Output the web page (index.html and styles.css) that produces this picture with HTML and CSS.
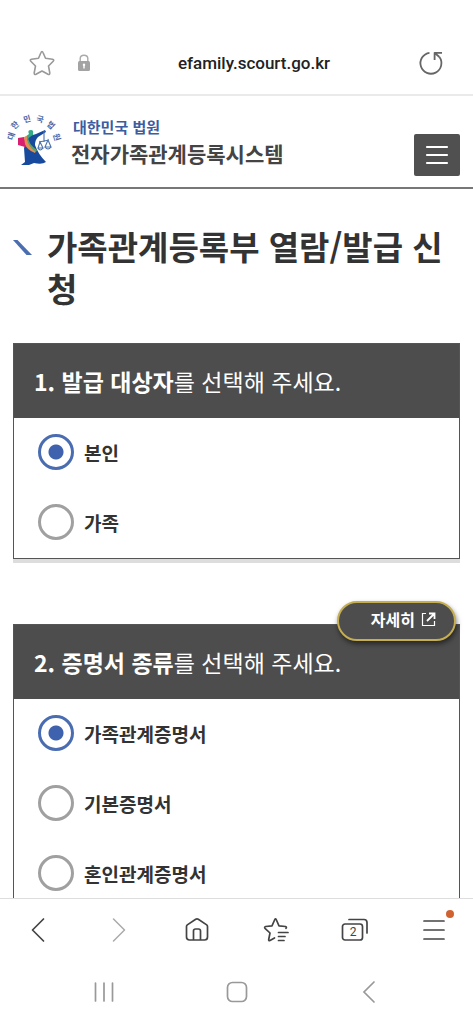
FILE: index.html
```html
<!DOCTYPE html>
<html lang="ko">

<head>
  <meta charset="UTF-8">
  <meta name="viewport" content="width=device-width, initial-scale=1.0">
  <title>전자가족관계등록시스템</title>
  <link rel="stylesheet" href="styles.css">
</head>

<body>

  <div class="address-bar">
    <button class="icon-btn" aria-label="즐겨찾기">
      <svg width="28" height="28" viewBox="0 0 28 28" fill="none" stroke="#999" stroke-width="1.6" stroke-linejoin="round"><path d="M14 2.5 Q14.6 2.5 15 3.5 L17.5 9.2 L24.5 10.2 Q26.5 10.8 25.2 12.2 L20.5 17 L21.8 24 Q21.8 26 20 25.3 L14 22 L8 25.3 Q6.2 26 6.2 24 L7.5 17 L2.8 12.2 Q1.5 10.8 3.5 10.2 L10.5 9.2 L13 3.5 Q13.4 2.5 14 2.5Z"/></svg>
    </button>
    <svg class="lock" width="14" height="18" viewBox="0 0 14 18"><path d="M3.2 8 V4.6 Q3.2 1.2 7 1.2 Q10.8 1.2 10.8 4.6 V8" fill="none" stroke="#aaa" stroke-width="1.4"/><rect x="1" y="7" width="12" height="10" rx="1.5" fill="#a3a3a3"/><path d="M7 9.5 A1.4 1.4 0 0 1 7.7 12 V14.5 H6.3 V12 A1.4 1.4 0 0 1 7 9.5" fill="#fff"/></svg>
    <span class="url">efamily.scourt.go.kr</span>
    <button class="icon-btn" aria-label="새로고침">
      <svg width="28" height="28" viewBox="0 0 28 28" fill="none" stroke="#666" stroke-width="1.8"><path d="M12.5 3.8 A10.5 10.5 0 1 0 22.4 8"/><path d="M25 3.8 H17.6 V11 M17.8 4 L22.4 8" stroke-linejoin="round"/></svg>
    </button>
  </div>

  <div class="page">
    <header class="site-header">
      <a class="logo" href="#">
        <svg class="emblem" width="62" height="64" viewBox="-3 -4 62 64">
          <g class="emblem-text">
            <text transform="translate(4 22) rotate(-72)" y="3">대</text>
            <text transform="translate(8 11) rotate(-43)" y="3">한</text>
            <text transform="translate(20 5) rotate(-15)" y="3">민</text>
            <text transform="translate(33 5) rotate(15)" y="3">국</text>
            <text transform="translate(44 11) rotate(43)" y="3">법</text>
            <text transform="translate(50 23) rotate(72)" y="3">원</text>
          </g>
          <path d="M22 20 Q20 16 24 16 Q27 16 26 20 L27 24 L19 28 L18 23 Z" fill="#35a985"/>
          <path d="M20 26 Q24 21 29 20 L38 16 L39 18 L31 23 Q28 26 28 31 Q31 40 39 48 Q35 51 27 49 L22 51 H14 L18 48 L17 34 Z" fill="#174a9c"/>
          <path d="M11 24 L17 23 L20 32 L18 33 L11 31Z" fill="#d81f70"/>
          <path d="M17 23 L20 22 Q20 31 29 37 L28 39 Q20 36 18 30Z" fill="#e58d50"/>
          <path d="M20 23 L21 22 Q21 30 30 36 L29 38 Q20 32 20 23Z" fill="#5ba16d"/>
          <g fill="none" stroke="#4d73ad" stroke-width="1.1">
            <path d="M37 17 V28 M32 28 L42 26 M33 28 L31 34 H36Z M41 26 L38 33 H44Z"/>
            <path d="M31 34 Q33 38 36 34 M38 33 Q41 37 44 33"/>
          </g>
        </svg>
        <span class="logo-text">
          <span class="logo-sub">대한민국 법원</span>
          <span class="logo-name">전자가족관계등록시스템</span>
        </span>
      </a>
      <button class="menu-btn" aria-label="전체메뉴">
        <svg width="24" height="20" viewBox="0 0 24 20" stroke="#fff" stroke-width="2.2" stroke-linecap="round"><path d="M2 2 H22 M2 10 H22 M2 18 H22"/></svg>
      </button>
    </header>

    <main class="content">
      <div class="title">
        <svg class="title-mark" width="20" height="16" viewBox="0 0 20 16"><path d="M0 0 H4.5 L19 15 H13.5Z" fill="#4a6eb0"/></svg>
        <h1>가족관계등록부 열람/발급 신청</h1>
      </div>

      <section class="step">
        <h2 id="step1"><b>1. 발급 대상자</b>를 선택해 주세요.</h2>
        <div class="options" role="radiogroup" aria-labelledby="step1">
          <label class="option"><input type="radio" name="target" checked>본인</label>
          <label class="option"><input type="radio" name="target">가족</label>
        </div>
      </section>

      <section class="step">
        <button class="detail-btn">자세히
          <svg width="15" height="15" viewBox="0 0 15 15" fill="none" stroke="#fff"><path d="M5 1.5 H1.5 V13.5 H13.5 V9" stroke-width="1.2"/><path d="M6 9 L12.5 2.5 M8 1.5 H13.5 V7" stroke-width="1.8"/></svg>
        </button>
        <h2 id="step2"><b>2. 증명서 종류</b>를 선택해 주세요.</h2>
        <div class="options" role="radiogroup" aria-labelledby="step2">
          <label class="option"><input type="radio" name="cert" checked>가족관계증명서</label>
          <label class="option"><input type="radio" name="cert">기본증명서</label>
          <label class="option"><input type="radio" name="cert">혼인관계증명서</label>
        </div>
      </section>
    </main>
  </div>

  <nav class="toolbar">
    <button class="icon-btn" aria-label="이전">
      <svg width="28" height="28" viewBox="0 0 28 28" fill="none" stroke="#444" stroke-width="1.7" stroke-linecap="round" stroke-linejoin="round"><path d="M18.5 3 L7.5 14 L18.5 25"/></svg>
    </button>
    <button class="icon-btn" aria-label="다음">
      <svg width="28" height="28" viewBox="0 0 28 28" fill="none" stroke="#aaa" stroke-width="1.5" stroke-linecap="round" stroke-linejoin="round"><path d="M9.5 3 L20.5 14 L9.5 25"/></svg>
    </button>
    <button class="icon-btn" aria-label="홈">
      <svg width="28" height="28" viewBox="0 0 28 28" fill="none" stroke="#444" stroke-width="1.7" stroke-linejoin="round"><path d="M3.5 10.5 Q3.5 9.5 4.3 8.9 L12.7 3.3 Q14 2.5 15.3 3.3 L23.7 8.9 Q24.5 9.5 24.5 10.5 V21 Q24.5 24 21.5 24 H6.5 Q3.5 24 3.5 21Z M10.5 24 V15 Q10.5 13 12.5 13 H15.5 Q17.5 13 17.5 15 V24"/></svg>
    </button>
    <button class="icon-btn" aria-label="북마크">
      <svg width="28" height="28" viewBox="0 0 28 28" fill="none" stroke="#444" stroke-width="1.7" stroke-linecap="round" stroke-linejoin="round"><path d="M12.5 22 L8 24.5 Q6.5 25 6.7 23.5 L8 17 L3 12.3 Q2 11 3.7 10.5 L10 9.8 L12.8 3.5 Q13.5 2 14.2 3.5 L17 9.8 L23.5 10.5 Q25 11 24 12.3 M16.5 16.5 H26 M16.5 20.5 H23 M16.5 24.5 H22"/></svg>
    </button>
    <button class="icon-btn" aria-label="탭">
      <svg width="28" height="28" viewBox="0 0 28 28" fill="none" stroke="#444" stroke-width="1.7" stroke-linecap="round"><rect x="1.5" y="8" width="20" height="16" rx="2.5"/><path d="M8 3.5 H23 Q26 3.5 26 6.5 V17"/></svg>
      <span class="tab-count">2</span>
    </button>
    <button class="icon-btn" aria-label="메뉴">
      <svg width="28" height="28" viewBox="0 0 28 28" fill="none" stroke="#444" stroke-width="1.7" stroke-linecap="round"><path d="M4 5 H24 M4 14 H24 M4 23 H24"/></svg>
      <span class="dot"></span>
    </button>
  </nav>

  <nav class="system-nav">
    <button class="icon-btn" aria-label="최근 앱">
      <svg width="28" height="28" viewBox="0 0 28 28" stroke="#999" stroke-width="1.7" stroke-linecap="round"><path d="M5.5 5 V23 M14 5 V23 M22.5 5 V23"/></svg>
    </button>
    <button class="icon-btn" aria-label="홈 화면">
      <svg width="28" height="28" viewBox="0 0 28 28" fill="none" stroke="#999" stroke-width="1.7"><rect x="4.5" y="4.5" width="19" height="19" rx="5"/></svg>
    </button>
    <button class="icon-btn" aria-label="뒤로">
      <svg width="28" height="28" viewBox="0 0 28 28" fill="none" stroke="#999" stroke-width="1.7" stroke-linecap="round"><path d="M19 4 L9 14 L19 24"/></svg>
    </button>
  </nav>

</body>

</html>
```
FILE: styles.css
```css
* {
  box-sizing: border-box;
}

body {
  margin: 0;
  height: 100vh;
  display: flex;
  flex-direction: column;
  background: #fff;
  color: #333;
  font-family: "Noto Sans CJK KR", sans-serif;
}

button {
  font-family: inherit;
  cursor: pointer;
}

svg {
  display: block;
}

.icon-btn {
  position: relative;
  padding: 0;
  border: none;
  background: none;
}

/* browser address bar */
.address-bar {
  display: flex;
  align-items: center;
  padding: 32px 28px 0;
  height: 96px;
  flex-shrink: 0;
  border-bottom: 2px solid #eaeaea;
}

.lock {
  margin-left: 21px;
}

.url {
  flex: 1;
  text-align: center;
  font-family: Roboto, sans-serif;
  font-size: 17px;
  font-weight: 500;
  color: #222;
}

/* web page */
.page {
  flex: 1;
  min-height: 0;
  overflow-y: auto;
  scrollbar-width: none;
}

.site-header {
  display: flex;
  justify-content: space-between;
  align-items: flex-end;
  height: 93px;
  padding: 0 13px 11px 4px;
  border-bottom: 2px solid #777;
}

.logo {
  display: flex;
  align-items: center;
  gap: 5px;
  padding-bottom: 2px;
  text-decoration: none;
}

.emblem {
  overflow: visible;
}

.emblem-text {
  font-size: 8px;
  font-weight: 700;
  text-anchor: middle;
  fill: #4d68a5;
}

.logo-text {
  display: flex;
  flex-direction: column;
}

.logo-sub {
  padding-left: 2px;
  font-size: 15px;
  line-height: 22px;
  font-weight: 700;
  color: #3c5da0;
}

.logo-name {
  font-size: 21px;
  line-height: 30px;
  font-weight: 700;
  color: #444;
}

.menu-btn {
  display: flex;
  align-items: center;
  justify-content: center;
  width: 46px;
  height: 42px;
  padding: 0;
  border: none;
  border-radius: 2px;
  background: #505050;
}

.content {
  padding: 36px 13px;
}

.title {
  display: flex;
  align-items: flex-start;
  gap: 14px;
  margin-bottom: 34px;
}

.title-mark {
  flex-shrink: 0;
  margin-top: 15px;
}

.title h1 {
  margin: 0;
  font-size: 33px;
  line-height: 42px;
  font-weight: 700;
  word-break: break-all;
}

.step {
  position: relative;
  margin-bottom: 65px;
  border: 1px solid #555;
  box-shadow: 0 4px 0 #ddd;
}

.step h2 {
  margin: 0;
  padding: 0 20px;
  font-size: 23px;
  line-height: 74px;
  font-weight: 400;
  color: #fff;
  background: #4d4d4d;
}

.step h2 b {
  font-weight: 700;
}

.option {
  display: flex;
  align-items: center;
  gap: 10px;
  height: 70px;
  padding: 0 0 2px 24px;
  font-size: 19px;
  font-weight: 700;
}

.option input {
  appearance: none;
  width: 36px;
  height: 36px;
  margin: 0;
  border: 3px solid #a0a0a0;
  border-radius: 50%;
  background: #fff;
}

.option input:checked {
  border-color: #4a6cb0;
  background: radial-gradient(circle, #3f62ae 7px, #fff 8px);
}

.detail-btn {
  position: absolute;
  top: -24px;
  right: 3px;
  display: flex;
  align-items: center;
  gap: 6px;
  height: 40px;
  padding: 0 18px 4px 32px;
  border: 2px solid #c5ae52;
  border-radius: 20px;
  background: #4d4d4d;
  box-shadow: 1px 3px 5px rgba(0, 0, 0, 0.5);
  font-size: 16px;
  font-weight: 700;
  color: #fff;
}

/* browser toolbar */
.toolbar {
  display: flex;
  justify-content: space-between;
  flex-shrink: 0;
  height: 64px;
  padding: 17px 25px 0;
  border-top: 1px solid #ddd;
}

.toolbar .icon-btn,
.system-nav .icon-btn {
  height: 28px;
}

.tab-count {
  position: absolute;
  top: 8px;
  left: 2px;
  width: 20px;
  font-family: Roboto, sans-serif;
  font-size: 12px;
  line-height: 17px;
  text-align: center;
  color: #444;
}

.dot {
  position: absolute;
  top: -6px;
  right: -6px;
  width: 8px;
  height: 8px;
  border-radius: 50%;
  background: #d06232;
}

.system-nav {
  display: flex;
  justify-content: space-between;
  flex-shrink: 0;
  height: 62px;
  padding: 16px 19% 0;
}
```
